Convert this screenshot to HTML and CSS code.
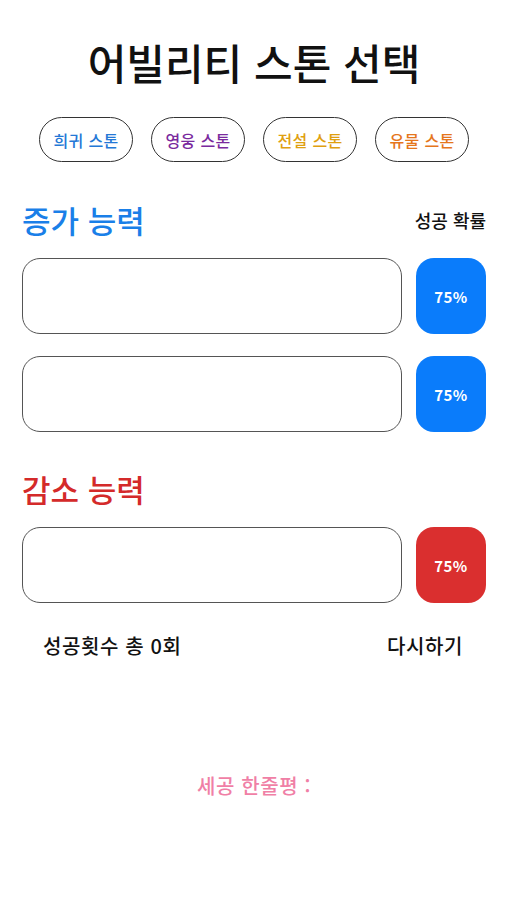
FILE: index.html
```html
<!DOCTYPE html>
<html lang="ko">
<head>
    <meta charset="UTF-8">
    <meta name="viewport" content="width=device-width, initial-scale=1.0">
    <title>어빌리티 스톤 선택</title>
    <link rel="stylesheet" href="styles.css">
</head>
<body>
    <div class="page">
        <h1 class="title">어빌리티 스톤 선택</h1>

        <div class="stone-list">
            <button class="stone rare">희귀 스톤</button>
            <button class="stone hero">영웅 스톤</button>
            <button class="stone legend">전설 스톤</button>
            <button class="stone relic">유물 스톤</button>
        </div>

        <div class="section-head">
            <h2 class="section-title up">증가 능력</h2>
            <span class="rate-label">성공 확률</span>
        </div>
        <div class="ability-row">
            <div class="ability-box"></div>
            <div class="rate up">75%</div>
        </div>
        <div class="ability-row">
            <div class="ability-box"></div>
            <div class="rate up">75%</div>
        </div>

        <div class="section-head down-head">
            <h2 class="section-title down">감소 능력</h2>
        </div>
        <div class="ability-row">
            <div class="ability-box"></div>
            <div class="rate down">75%</div>
        </div>

        <div class="footer-row">
            <span>성공횟수 총 0회</span>
            <span>다시하기</span>
        </div>

        <p class="review">세공 한줄평 :</p>
    </div>
</body>
</html>
```

FILE: styles.css
```css
body {
    margin: 0;
    background-color: #ffffff;
    color: #111111;
    font-family: "Noto Sans CJK KR", "Noto Sans", sans-serif;
}

.page {
    display: flex;
    flex-direction: column;
    padding: 0 20px 0 22px;
}

.title {
    margin: 38px 0 0;
    font-size: 42px;
    font-weight: 500;
    line-height: 48px;
    text-align: center;
    color: #111111;
}

.stone-list {
    display: flex;
    justify-content: center;
    gap: 18px;
    margin-top: 31px;
}

.stone {
    width: 94px;
    height: 45px;
    padding: 0;
    background-color: #ffffff;
    border: 1px solid #333333;
    border-radius: 23px;
    font-family: inherit;
    font-size: 16px;
    font-weight: 500;
    letter-spacing: 0.3px;
    cursor: pointer;
}

.stone.rare {
    color: #2478d6;
}

.stone.hero {
    color: #7a2a9e;
}

.stone.legend {
    color: #dfa010;
}

.stone.relic {
    color: #e5761c;
}

.section-head {
    display: flex;
    justify-content: space-between;
    align-items: center;
    margin-top: 40px;
    margin-bottom: 20px;
}

.down-head {
    margin-top: 39px;
}

.section-title {
    margin: 0;
    font-size: 31px;
    font-weight: 500;
    line-height: 36px;
}

.section-title.up {
    color: #1a7fe8;
}

.section-title.down {
    color: #d42a2a;
}

.rate-label {
    font-size: 18px;
    font-weight: 500;
}

.ability-row {
    display: flex;
    gap: 14px;
    height: 76px;
}

.ability-row + .ability-row {
    margin-top: 22px;
}

.ability-box {
    flex: 1;
    border: 1.5px solid #555555;
    border-radius: 18px;
}

.rate {
    width: 70px;
    display: flex;
    align-items: center;
    justify-content: center;
    border-radius: 18px;
    color: #ffffff;
    font-size: 15px;
    font-weight: bold;
    letter-spacing: 0.5px;
}

.rate.up {
    background-color: #0a7cfb;
}

.rate.down {
    background-color: #da2f2f;
}

.footer-row {
    display: flex;
    justify-content: space-between;
    margin-top: 31px;
    padding: 0 23px 0 21px;
    font-size: 20px;
    font-weight: 500;
    letter-spacing: 0.6px;
    line-height: 24px;
}

.review {
    margin: 116px 0 0;
    text-align: center;
    font-size: 20px;
    font-weight: 500;
    letter-spacing: 0.6px;
    line-height: 24px;
    color: #f07fa6;
}
```
